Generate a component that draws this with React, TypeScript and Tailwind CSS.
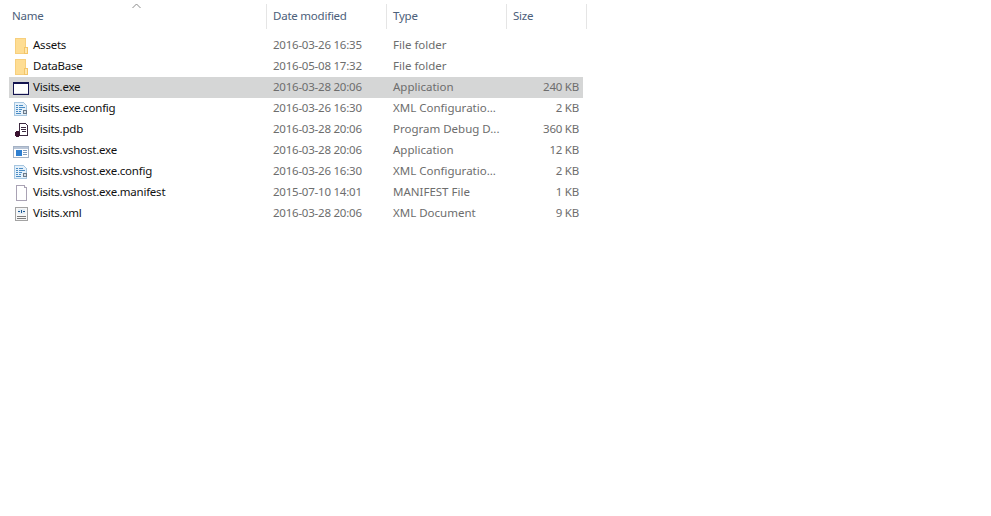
import React from 'react';

type Kind = 'folder' | 'app' | 'config' | 'pdb' | 'vshost' | 'blank' | 'xml';

interface FileRow {
    name: string;
    modified: string;
    type: string;
    size: string;
    kind: Kind;
    selected?: boolean;
}

const files: FileRow[] = [
    { name: 'Assets', modified: '2016-03-26 16:35', type: 'File folder', size: '', kind: 'folder' },
    { name: 'DataBase', modified: '2016-05-08 17:32', type: 'File folder', size: '', kind: 'folder' },
    { name: 'Visits.exe', modified: '2016-03-28 20:06', type: 'Application', size: '240 KB', kind: 'app', selected: true },
    { name: 'Visits.exe.config', modified: '2016-03-26 16:30', type: 'XML Configuratio...', size: '2 KB', kind: 'config' },
    { name: 'Visits.pdb', modified: '2016-03-28 20:06', type: 'Program Debug D...', size: '360 KB', kind: 'pdb' },
    { name: 'Visits.vshost.exe', modified: '2016-03-28 20:06', type: 'Application', size: '12 KB', kind: 'vshost' },
    { name: 'Visits.vshost.exe.config', modified: '2016-03-26 16:30', type: 'XML Configuratio...', size: '2 KB', kind: 'config' },
    { name: 'Visits.vshost.exe.manifest', modified: '2015-07-10 14:01', type: 'MANIFEST File', size: '1 KB', kind: 'blank' },
    { name: 'Visits.xml', modified: '2016-03-28 20:06', type: 'XML Document', size: '9 KB', kind: 'xml' },
];

const FileIcon: React.FC<{ kind: Kind }> = ({ kind }) => {
    const common = { width: 16, height: 16, viewBox: '0 0 16 16', shapeRendering: 'crispEdges' as const };
    switch (kind) {
        case 'folder':
            return (
                <svg {...common}>
                    <path d="M2.5 0.5h10v15h-10z" fill="#fedd93" stroke="#f7cf7d" />
                    <path d="M11.5 9.5h3v6h-3z" fill="#ffe7ae" stroke="#f3c56a" />
                </svg>
            );
        case 'app':
            return (
                <svg {...common}>
                    <rect x="0.5" y="2.5" width="15" height="12" fill="#ffffff" stroke="#13134f" />
                    <rect x="1" y="3" width="14" height="1" fill="#13134f" />
                    <rect x="1" y="13" width="14" height="1" fill="#d9d9e4" />
                </svg>
            );
        case 'config':
            return (
                <svg {...common}>
                    <path d="M1.5 1.5h9l3 3v10h-12z" fill="#e4f0fa" stroke="#a6c6e0" />
                    <path d="M3 4h2v1H3zM6 4h4v1H6zM3 6h2v1H3zM6 6h6v1H6zM3 8h2v1H3zM6 8h3v1H6zM3 10h2v1H3zM6 10h2v1H6zM3 12h5v1H3z" fill="#4a8cc4" />
                    <circle cx="12" cy="11" r="2.5" fill="#6b7a8a" />
                    <circle cx="12" cy="11" r="1" fill="#d4dfe8" />
                </svg>
            );
        case 'pdb':
            return (
                <svg {...common}>
                    <path d="M6.5 1.5h6l2 2v10h-8z" fill="#ffffff" stroke="#3d2a40" />
                    <path d="M8 5h5v1H8zM8 7h5v1H8zM9 9h4v1H9z" fill="#3d2a40" />
                    <circle cx="4.5" cy="12" r="3" fill="#3b1230" />
                </svg>
            );
        case 'vshost':
            return (
                <svg {...common}>
                    <rect x="0.5" y="3.5" width="15" height="11" fill="#ffffff" stroke="#a5b2c4" />
                    <rect x="1" y="4" width="14" height="2" fill="#b9c5d6" />
                    <rect x="3" y="7" width="6" height="6" fill="#2f7fd0" />
                    <path d="M10 7h4v1h-4zM10 9h4v1h-4zM10 11h4v1h-4z" fill="#7f9cbd" />
                </svg>
            );
        case 'blank':
            return (
                <svg {...common}>
                    <path d="M3.5 0.5h8l2 2v13h-10z" fill="#ffffff" stroke="#a9a2b4" />
                    <path d="M11.5 0.5v2h2" fill="#f0f0f0" stroke="#a9a2b4" />
                </svg>
            );
        case 'xml':
            return (
                <svg {...common}>
                    <path d="M2.5 1.5h12v13h-12z" fill="#f7f7f7" stroke="#a3a3a3" />
                    <path d="M5 3h7v5H5z" fill="#e4edf4" />
                    <path d="M6 5h1v1H6zM10 5h1v1h-1zM5 5h1v1H5zM11 5h1v1h-1z" fill="#1f5a94" />
                    <path d="M8 4h1v3H8z" fill="#1f5a94" />
                    <path d="M4 10h9v1H4zM4 12h9v1H4z" fill="#7b7b7b" />
                </svg>
            );
    }
};

const HeaderCell: React.FC<{ label: string; className: string }> = ({ label, className }) => (
    <div className={`flex items-center pl-[6px] pb-[1px] border-r border-[#e5e5e5] h-[25px] ${className}`}>
        {label}
    </div>
);

export default function App() {
    return (
        <div className="h-[516px] w-[991px] bg-white overflow-hidden text-[11.5px] tracking-[-0.23px] font-['Noto_Sans','Open_Sans',sans-serif]">
            <div className="relative flex pt-[4px] text-[#4c607a] h-[35px] items-start">
                <svg className="absolute left-[132px] top-[3px]" width="9" height="6" viewBox="0 0 9 6" fill="none">
                    <path d="M0.5 5L4.5 1L8.5 5" stroke="#8a8a8a" strokeWidth="1" />
                </svg>
                <div className="w-[267px] h-[25px] flex items-center pl-[12px] pb-[1px] border-r border-[#e5e5e5]">Name</div>
                <HeaderCell label="Date modified" className="w-[120px]" />
                <HeaderCell label="Type" className="w-[120px]" />
                <HeaderCell label="Size" className="w-[80px]" />
            </div>
            <div className="ml-[9px] w-[574px] flex flex-col">
                {files.map((file) => (
                    <div
                        key={file.name}
                        className={`flex items-center h-[21px] ${file.selected ? 'bg-[#d5d6d6]' : ''}`}
                    >
                        <div className="w-[258px] flex items-center pl-[4px] text-[#111111]">
                            <FileIcon kind={file.kind} />
                            <span className="ml-[4px] pb-[1px] whitespace-nowrap">{file.name}</span>
                        </div>
                        <div className="w-[120px] pl-[6px] pb-[1px] text-[#6d6d6d] whitespace-nowrap">{file.modified}</div>
                        <div className="w-[120px] pl-[6px] pb-[1px] text-[#6d6d6d] tracking-normal whitespace-nowrap">{file.type}</div>
                        <div className="w-[72px] pb-[1px] text-right text-[#6d6d6d] whitespace-nowrap">{file.size}</div>
                    </div>
                ))}
            </div>
        </div>
    );
}
